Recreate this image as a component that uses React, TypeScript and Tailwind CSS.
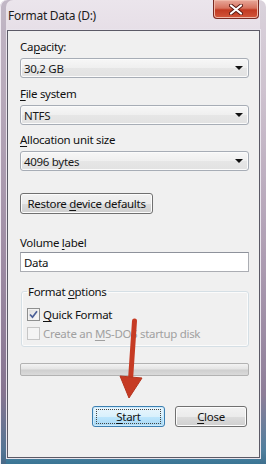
// Windows 7 "Format" dialog with the Aero frame and a red hint arrow over the Start button.

const FONT = "font-['Noto_Sans',sans-serif] text-[11.5px] tracking-[-0.3px]";

function U({ children }: { children: string }) {
  return <span className="underline decoration-1 underline-offset-[2px]">{children}</span>;
}

function Combo({ value }: { value: string }) {
  return (
    <div className="mt-[4px] flex h-[20px] w-[229px] items-center justify-between rounded-[3px] border border-[#a7adb6] bg-[linear-gradient(#f7f7f7,#efefef_50%,#e6e6e6_50%,#e2e2e2)] pl-[3px] pr-[5px] shadow-[inset_0_0_0_1px_#fbfbfb]">
      <span className="leading-[15px] text-[#1a1a1a]">{value}</span>
      <span className="h-0 w-0 border-x-[4px] border-t-[4px] border-x-transparent border-t-[#111]" />
    </div>
  );
}

function Button({ children, primary, className }: { children: React.ReactNode; primary?: boolean; className?: string }) {
  return (
    <div
      className={
        "flex h-[21px] items-center justify-center rounded-[3px] border leading-[15px] text-[#111] " +
        (primary
          ? "border-[#3c7fb1] bg-[linear-gradient(#eaf6fd,#d9f0fc_50%,#bee6fd_50%,#a7d9f5)] shadow-[inset_0_0_0_1px_#cdeafb] "
          : "border-[#707070] bg-[linear-gradient(#f2f2f2,#ebebeb_50%,#dddddd_50%,#cfcfcf)] shadow-[inset_0_0_0_1px_#fcfcfc] ") +
        (className ?? "")
      }
    >
      {primary ? (
        <span className="flex h-[15px] w-[65px] items-center justify-center border border-dotted border-[#444]">{children}</span>
      ) : (
        children
      )}
    </div>
  );
}

function Check({ checked, disabled, children }: { checked?: boolean; disabled?: boolean; children: React.ReactNode }) {
  return (
    <div className={"flex h-[19px] items-center gap-[3px] " + (disabled ? "text-[#a0a0a0]" : "text-[#111]")}>
      <span
        className={
          "flex h-[13px] w-[13px] items-center justify-center border " +
          (disabled
            ? "border-[#c6c6c6] bg-[#f4f4f4]"
            : "border-[#8e8f8f] bg-[linear-gradient(135deg,#dcdcdc,#fbfbfb)] shadow-[inset_0_0_0_1px_#f2f2f2]")
        }
      >
        {checked && (
          <svg width="9" height="9" viewBox="0 0 9 9">
            <path d="M1 4.5 L3.5 7.2 L8 1.2" fill="none" stroke="#4a5f97" strokeWidth="1.7" />
          </svg>
        )}
      </span>
      <span className="leading-[15px]">{children}</span>
    </div>
  );
}

export default function App() {
  return (
    <div className={"relative flex h-[464px] w-[266px] flex-col overflow-hidden rounded-t-[7px] bg-[linear-gradient(180deg,#ebe5ec_0%,#ddd2dd_20%,#b9a8bd_55%,#94849f_85%,#4f86a5_97%,#3a7594_100%)] shadow-[inset_1px_0_0_#efe9f1,inset_6px_0_0_rgba(100,80,110,0.3),inset_-6px_0_0_rgba(100,80,110,0.12)] " + FONT}>
      {/* title bar */}
      <div className="flex h-[30px] shrink-0 items-start justify-between">
        <span className="pl-[8px] pt-[8px] text-[12px] leading-[15px] text-[#1c1c1c]">Format Data (D:)</span>
        <div className="mr-[7px] flex h-[19px] w-[46px] items-center justify-center rounded-b-[4px] border border-t-0 border-[#7a2a22] bg-[linear-gradient(#e8a89a,#d7735f_45%,#c23a22_55%,#d2563a)] shadow-[inset_0_0_0_1px_#f0b8a8]">
          <svg width="14" height="11" viewBox="0 0 14 11">
            <path d="M2 1.5 L12 9.5 M12 1.5 L2 9.5" stroke="#5a1a12" strokeWidth="4" strokeLinecap="round" />
            <path d="M2 1.5 L12 9.5 M12 1.5 L2 9.5" stroke="#ffffff" strokeWidth="2.2" strokeLinecap="round" />
          </svg>
        </div>
      </div>

      {/* client area */}
      <div className="mb-[6px] ml-[7px] mr-[6px] flex flex-1 flex-col border border-[#5b5a66] bg-[#f0f0f0] pl-[12px] pt-[8px] text-[#111] shadow-[0_0_0_1px_#e9e4ec]">
        <div className="leading-[15px]">
          Ca<U>p</U>acity:
        </div>
        <Combo value="30,2 GB" />

        <div className="mt-[8px] leading-[15px]">
          <U>F</U>ile system
        </div>
        <Combo value="NTFS" />

        <div className="mt-[7px] leading-[15px]">
          <U>A</U>llocation unit size
        </div>
        <Combo value="4096 bytes" />

        <Button className="mt-[22px] w-[133px]">
          <span>
            Restore <U>d</U>evice defaults
          </span>
        </Button>

        <div className="mt-[21px] leading-[15px]">
          Volume <U>l</U>abel
        </div>
        <div className="mt-[2px] flex h-[20px] w-[229px] items-center border border-[#abadb3] border-t-[#8e929b] bg-white pl-[3px] leading-[15px]">
          Data
        </div>

        <fieldset className="ml-[1px] mt-[12px] h-[63px] w-[228px] rounded-[3px] border border-[#d5dfe5] px-[5px] shadow-[inset_0_0_0_1px_#fbfbfb]">
          <legend className="px-[1px] leading-[15px]">
            Format <U>o</U>ptions
          </legend>
          <div className="pt-[6px]">
            <Check checked>
              <U>Q</U>uick Format
            </Check>
            <Check disabled>
              Create an <U>M</U>S-DOS startup disk
            </Check>
          </div>
        </fieldset>

        <div className="mt-[16px] h-[13px] w-[229px] rounded-[2px] border border-[#b2b2b2] bg-[linear-gradient(#f3f3f3,#e4e4e4_45%,#cfcfcf_55%,#dadada)]" />

        <div className="mt-[30px] flex w-[227px] justify-end gap-[10px]">
          <Button primary className="w-[73px]">
            <span>
              <U>S</U>tart
            </span>
          </Button>
          <Button className="w-[72px]">
            <span>
              <U>C</U>lose
            </span>
          </Button>
        </div>
      </div>

      {/* red hint arrow over the dialog */}
      <svg className="pointer-events-none absolute left-0 top-0" width="266" height="464" viewBox="0 0 266 464">
        <path d="M134.5 321 L130.5 380" stroke="#c63b24" strokeWidth="5" strokeLinecap="round" />
        <path d="M120 376 L142 378 L129 398 Z" fill="#c63b24" stroke="#b5351f" strokeWidth="1" strokeLinejoin="round" />
      </svg>
    </div>
  );
}
